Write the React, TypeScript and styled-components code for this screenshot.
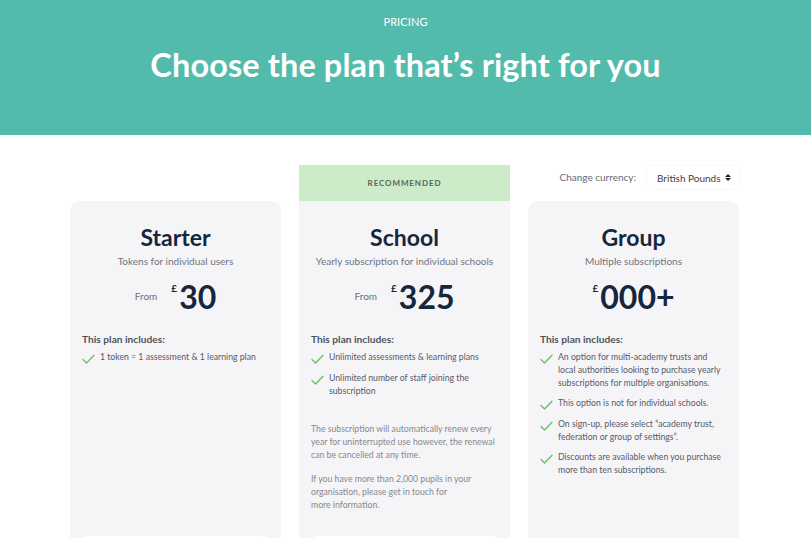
import styled, { createGlobalStyle } from "styled-components";

const GlobalStyle = createGlobalStyle`
  html, body {
    margin: 0;
    padding: 0;
    height: 100%;
    overflow: hidden;
    background: #fff;
  }
  body {
    font-family: "Lato", "Noto Sans", sans-serif;
    color: #1a2a40;
  }
  * {
    box-sizing: border-box;
  }
`;

const Hero = styled.header`
  background-color: #53bbab;
  height: 135px;
  display: flex;
  flex-direction: column;
  align-items: center;
  padding-top: 15px;
  color: #fff;
`;

const Eyebrow = styled.div`
  font-size: 11px;
  letter-spacing: 0.1px;
  line-height: 14px;
`;

const Heading = styled.h1`
  margin: 17px 0 0;
  font-size: 32.5px;
  font-weight: 700;
  line-height: 38px;
  letter-spacing: 0.1px;
`;

const Plans = styled.section`
  width: 669px;
  margin: 30px 0 0 70px;
  display: grid;
  grid-template-columns: repeat(3, 1fr);
  column-gap: 18px;
`;

const Column = styled.div`
  display: flex;
  flex-direction: column;
`;

const TopSlot = styled.div`
  height: 36px;
  display: flex;
  align-items: flex-start;
  justify-content: flex-end;
  gap: 11px;
`;

const Banner = styled.div`
  height: 36px;
  background: #cdebc8;
  display: flex;
  align-items: center;
  justify-content: center;
  font-size: 8px;
  font-weight: 700;
  letter-spacing: 0.9px;
  color: #56645a;
`;

const CurrencyLabel = styled.span`
  font-size: 10px;
  color: #666b73;
  line-height: 23px;
  margin-top: 1px;
`;

const CurrencySelect = styled.div`
  margin-top: 1px;
  width: 92px;
  height: 23px;
  background: #fff;
  border-radius: 4px;
  box-shadow: 0 0 3px rgba(0, 0, 0, 0.06);
  display: flex;
  align-items: center;
  justify-content: space-between;
  padding: 0 8px 0 10px;
  font-size: 10px;
  color: #3a3f48;
`;

const Arrows = styled.span`
  display: flex;
  flex-direction: column;
  gap: 1px;
  &::before,
  &::after {
    content: "";
    border-left: 3px solid transparent;
    border-right: 3px solid transparent;
  }
  &::before {
    border-bottom: 3px solid #222;
  }
  &::after {
    border-top: 3px solid #222;
  }
`;

const Card = styled.div<{ $flat?: boolean }>`
  flex: 1;
  background: #f5f5f8;
  border-radius: ${(p) => (p.$flat ? "0 0 10px 10px" : "10px")};
  padding: 24px 12px 0;
  display: flex;
  flex-direction: column;
`;

const PlanName = styled.h2`
  margin: 0;
  text-align: center;
  font-size: 23px;
  font-weight: 700;
  line-height: 24px;
  color: #16263d;
`;

const PlanTagline = styled.div`
  margin-top: 5px;
  text-align: center;
  font-size: 10px;
  line-height: 14px;
  color: #70747c;
`;

const PriceRow = styled.div`
  margin-top: 13px;
  height: 32px;
  display: flex;
  align-items: center;
  justify-content: center;
`;

const From = styled.span`
  font-size: 10px;
  color: #6b6f77;
  margin-right: 14px;
  margin-top: -2px;
`;

const Pound = styled.span`
  align-self: flex-start;
  font-size: 10px;
  font-weight: 700;
  color: #16263d;
  margin-top: 1px;
  margin-right: 2px;
`;

const Amount = styled.span`
  font-size: 32px;
  font-weight: 700;
  line-height: 32px;
  color: #16263d;
`;

const IncludesTitle = styled.div`
  margin-top: 19px;
  font-size: 10.2px;
  font-weight: 700;
  line-height: 14px;
  color: #505359;
`;

const FeatureList = styled.ul`
  list-style: none;
  margin: 4px 0 0;
  padding: 0;
  display: flex;
  flex-direction: column;
  gap: 7px;
`;

const Feature = styled.li`
  display: flex;
  gap: 5px;
  font-size: 8.7px;
  line-height: 13px;
  color: #555a68;
`;

const Tick = styled.svg`
  flex: none;
  width: 13px;
  height: 10px;
  margin-top: 4px;
`;

const Note = styled.p`
  margin: 0;
  font-size: 8.7px;
  line-height: 13px;
  color: #858890;
  & + & {
    margin-top: 11px;
  }
`;

const Notes = styled.div`
  margin: 25px 0 25px;
`;

const ActionButton = styled.div`
  margin-top: auto;
  height: 36px;
  background: #fff;
  border-radius: 6px;
`;

const Check = () => (
  <Tick viewBox="0 0 13 10" fill="none">
    <path
      d="M1 5.5 L4.5 9 L12 1.2"
      stroke="#6cbf6a"
      strokeWidth="1.4"
      strokeLinecap="round"
      strokeLinejoin="round"
    />
  </Tick>
);

type Plan = {
  name: string;
  tagline: string;
  from: boolean;
  amount: string;
  features: string[];
  notes?: string[][];
  button: boolean;
};

const plans: Plan[] = [
  {
    name: "Starter",
    tagline: "Tokens for individual users",
    from: true,
    amount: "30",
    features: ["1 token = 1 assessment & 1 learning plan"],
    button: true,
  },
  {
    name: "School",
    tagline: "Yearly subscription for individual schools",
    from: true,
    amount: "325",
    features: [
      "Unlimited assessments & learning plans",
      "Unlimited number of staff joining the subscription",
    ],
    notes: [
      [
        "The subscription will automatically renew every year for uninterrupted use however, the renewal can be cancelled at any time.",
      ],
      [
        "If you have more than 2,000 pupils in your organisation, please get in touch for",
        "more information.",
      ],
    ],
    button: true,
  },
  {
    name: "Group",
    tagline: "Multiple subscriptions",
    from: false,
    amount: "000+",
    features: [
      "An option for multi-academy trusts and local authorities looking to purchase yearly subscriptions for multiple organisations.",
      "This option is not for individual schools.",
      "On sign-up, please select \u201cacademy trust, federation or group of settings\u201d.",
      "Discounts are available when you purchase more than ten subscriptions.",
    ],
    button: false,
  },
];

const PlanCard = ({ plan, flat }: { plan: Plan; flat?: boolean }) => (
  <Card $flat={flat}>
    <PlanName>{plan.name}</PlanName>
    <PlanTagline>{plan.tagline}</PlanTagline>
    <PriceRow>
      {plan.from && <From>From</From>}
      <Pound>£</Pound>
      <Amount>{plan.amount}</Amount>
    </PriceRow>
    <IncludesTitle>This plan includes:</IncludesTitle>
    <FeatureList>
      {plan.features.map((f) => (
        <Feature key={f}>
          <Check />
          <span>{f}</span>
        </Feature>
      ))}
    </FeatureList>
    {plan.notes && (
      <Notes>
        {plan.notes.map((lines) => (
          <Note key={lines[0]}>
            {lines.map((l, i) => (
              <span key={l}>
                {i > 0 && <br />}
                {l}
              </span>
            ))}
          </Note>
        ))}
      </Notes>
    )}
    {plan.button ? <ActionButton /> : null}
  </Card>
);

export default function App() {
  return (
    <>
      <GlobalStyle />
      <Hero>
        <Eyebrow>PRICING</Eyebrow>
        <Heading>Choose the plan that’s right for you</Heading>
      </Hero>
      <Plans>
        <Column>
          <TopSlot />
          <PlanCard plan={plans[0]} />
        </Column>
        <Column>
          <Banner>RECOMMENDED</Banner>
          <PlanCard plan={plans[1]} flat />
        </Column>
        <Column>
          <TopSlot>
            <CurrencyLabel>Change currency:</CurrencyLabel>
            <CurrencySelect>
              British Pounds
              <Arrows />
            </CurrencySelect>
          </TopSlot>
          <PlanCard plan={plans[2]} />
        </Column>
      </Plans>
    </>
  );
}
